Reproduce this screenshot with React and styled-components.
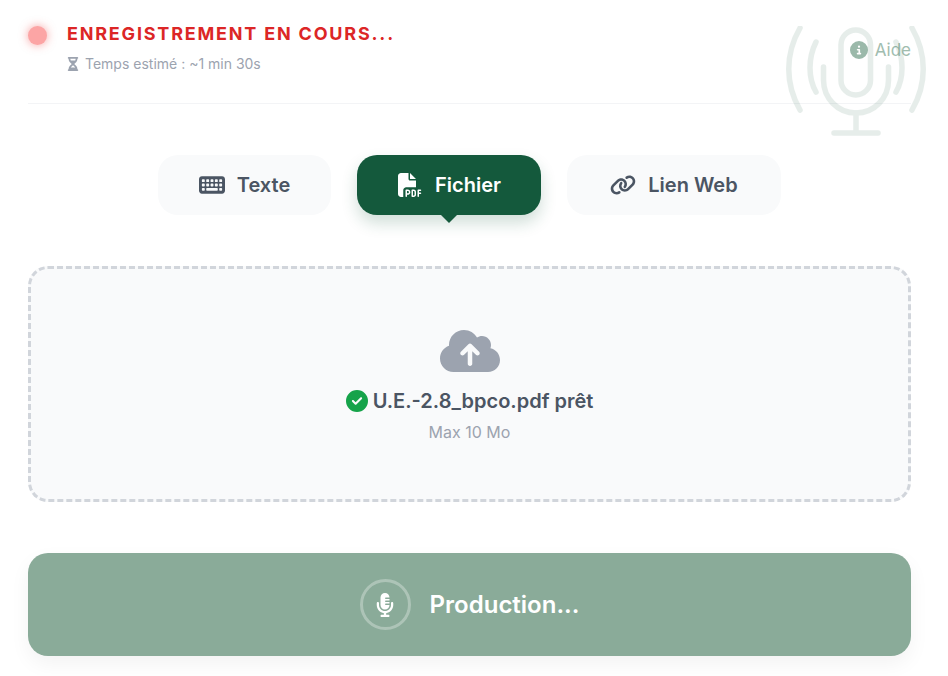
import React from 'react';
import styled, {createGlobalStyle} from 'styled-components';
import {
  FaKeyboard,
  FaFilePdf,
  FaLink,
  FaCloudArrowUp,
  FaCircleCheck,
  FaCircleInfo,
  FaHourglassHalf,
  FaMicrophoneLines,
} from 'react-icons/fa6';

const GlobalStyle = createGlobalStyle`
  html, body {
    margin: 0;
    padding: 0;
    background: #fff;
    font-family: Inter, "Liberation Sans", sans-serif;
  }
`;

const tabs = [
  {label: 'Texte', icon: <FaKeyboard />, width: 173},
  {label: 'Fichier', icon: <FaFilePdf />, width: 184, active: true},
  {label: 'Lien Web', icon: <FaLink />, width: 214},
];

const BigMic = () => (
  <MicArt viewBox='0 0 150 120' fill='none'>
    <g stroke='#14593c' strokeWidth='5.5' strokeLinecap='round' strokeLinejoin='round'>
      <rect x='56' y='4' width='29.5' height='65' rx='14.75' />
      <path d='M38.500 41v13c0 18 14 33 32.500 33s32.500-15 32.500-33V41' />
      <path d='M71 87v20M49 107h44' />
      <path d='M31 16c-8 16-8 36 0 50M111 16c8 16 8 36 0 50' />
      <path d='M15 2c-15 26-15 56 0 82M127 2c15 26 15 56 0 82' />
    </g>
  </MicArt>
);

const App = () => (
  <Page>
    <GlobalStyle />
    <Header>
      <BigMic />
      <Dot />
      <Status>
        <Title>ENREGISTREMENT EN COURS...</Title>
        <Estimate>
          <FaHourglassHalf />
          Temps estimé : ~1 min 30s
        </Estimate>
      </Status>
      <Help>
        <FaCircleInfo />
        Aide
      </Help>
    </Header>

    <Tabs>
      {tabs.map((tab) => (
        <Tab key={tab.label} $active={tab.active} $width={tab.width}>
          {tab.icon}
          {tab.label}
        </Tab>
      ))}
    </Tabs>

    <DropZone>
      <FaCloudArrowUp />
      <FileName>
        <FaCircleCheck />
        U.E.-2.8_bpco.pdf prêt
      </FileName>
      <Limit>Max 10 Mo</Limit>
    </DropZone>

    <SubmitButton>
      <MicCircle>
        <FaMicrophoneLines />
      </MicCircle>
      Production...
    </SubmitButton>
  </Page>
);

export default App;

const Page = styled.div`
  width: 948px;
  height: 676px;
  box-sizing: border-box;
  padding: 0 37px 0 28px;
  overflow: hidden;
`;

const Header = styled.header`
  position: relative;
  display: flex;
  align-items: flex-start;
  height: 104px;
  box-sizing: border-box;
  padding-top: 23px;
  border-bottom: 1px solid #f3f4f6;
`;

const MicArt = styled.svg`
  position: absolute;
  top: 26px;
  left: 757px;
  width: 150px;
  height: 120px;
  opacity: 0.1;
`;

const Dot = styled.span`
  width: 19px;
  height: 19px;
  margin-top: 3px;
  border-radius: 50%;
  background: #fca5a5;
  box-shadow: 0 0 10px rgba(239, 68, 68, 0.5);
`;

const Status = styled.div`
  margin-left: 20px;
  flex: 1;
`;

const Title = styled.div`
  font-size: 18px;
  line-height: 22px;
  font-weight: 700;
  letter-spacing: 1.8px;
  color: #dc2626;
`;

const Estimate = styled.div`
  display: flex;
  align-items: center;
  gap: 6px;
  margin-top: 9px;
  font-size: 14px;
  line-height: 20px;
  color: #9ca3af;

  svg {
    width: 12px;
    height: 14px;
  }
`;

const Help = styled.div`
  display: flex;
  align-items: center;
  gap: 7px;
  margin-top: 15px;
  font-size: 17px;
  line-height: 24px;
  color: #a1bdaf;

  svg {
    width: 18px;
    height: 18px;
    color: #9bb9aa;
  }
`;

const Tabs = styled.nav`
  display: flex;
  justify-content: center;
  gap: 26px;
  margin-top: 51px;
`;

const Tab = styled.div`
  position: relative;
  display: flex;
  align-items: center;
  justify-content: center;
  gap: 12px;
  width: ${(p) => p.$width}px;
  height: 60px;
  border-radius: 20px;
  font-size: 20px;
  font-weight: 600;
  color: ${(p) => (p.$active ? '#fff' : '#4b5563')};
  background: ${(p) => (p.$active ? '#14593c' : '#f9fafb')};
  box-shadow: ${(p) => (p.$active ? '0 8px 16px rgba(20, 89, 60, 0.2)' : 'none')};

  svg {
    width: 26px;
    height: 24px;
  }

  &::after {
    content: '';
    display: ${(p) => (p.$active ? 'block' : 'none')};
    position: absolute;
    bottom: -8px;
    left: 50%;
    margin-left: -8px;
    border-left: 8px solid transparent;
    border-right: 8px solid transparent;
    border-top: 8px solid #14593c;
  }
`;

const DropZone = styled.div`
  display: flex;
  flex-direction: column;
  align-items: center;
  height: 236px;
  box-sizing: border-box;
  margin-top: 51px;
  padding-top: 58px;
  border: 3px dashed #d1d5db;
  border-radius: 20px;
  background: #f9fafb;

  > svg {
    width: 60px;
    height: 48px;
    color: #9ca3af;
  }
`;

const FileName = styled.div`
  display: flex;
  align-items: center;
  gap: 5px;
  margin-top: 12px;
  font-size: 20px;
  line-height: 28px;
  font-weight: 600;
  color: #4b5563;

  svg {
    width: 22px;
    height: 22px;
    color: #16a34a;
  }
`;

const Limit = styled.div`
  margin-top: 5px;
  font-size: 16px;
  line-height: 24px;
  color: #9ca3af;
`;

const SubmitButton = styled.div`
  display: flex;
  align-items: center;
  justify-content: center;
  gap: 19px;
  height: 103px;
  margin-top: 51px;
  border-radius: 20px;
  background: #8aab99;
  box-shadow: 0 8px 20px rgba(0, 0, 0, 0.05);
  font-size: 24px;
  font-weight: 600;
  color: #fff;
`;

const MicCircle = styled.span`
  display: flex;
  align-items: center;
  justify-content: center;
  width: 51px;
  height: 51px;
  box-sizing: border-box;
  border: 3px solid rgba(255, 255, 255, 0.3);
  border-radius: 50%;

  svg {
    width: 18px;
    height: 24px;
  }
`;
